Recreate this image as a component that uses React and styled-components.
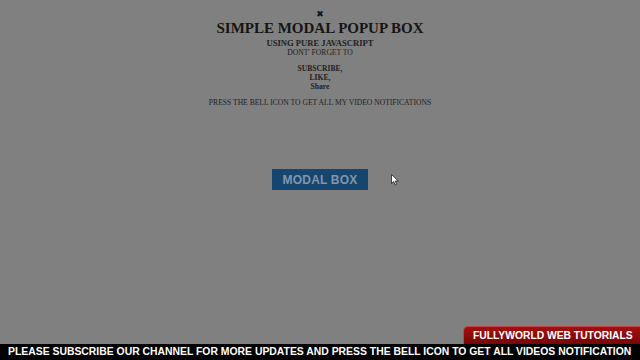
import React from "react";
import styled, { createGlobalStyle } from "styled-components";

const Global = createGlobalStyle`
  html, body { margin: 0; padding: 0; }
  body { background: #808080; }
`;

const Page = styled.div`
  position: relative;
  width: 640px;
  height: 360px;
  background: #808080;
  display: flex;
  flex-direction: column;
  overflow: hidden;
`;

const Content = styled.main`
  flex: 1;
  display: flex;
  flex-direction: column;
  align-items: center;
  padding-top: 10px;
  font-family: "Liberation Serif", "Times New Roman", serif;
  color: #1a1a1a;
`;

const Close = styled.span`
  font-family: "DejaVu Sans", sans-serif;
  font-size: 9px;
  font-weight: bold;
  line-height: 9px;
  color: #111;
`;

const Title = styled.h1`
  margin: 1px 0 0;
  font-size: 15px;
  line-height: 16px;
  font-weight: bold;
  color: #151515;
`;

const Line = styled.div`
  font-size: ${(p) => p.$size || 7.6}px;
  line-height: ${(p) => p.$lh || 8.5}px;
  font-weight: ${(p) => (p.$bold ? "bold" : "normal")};
  margin-top: ${(p) => p.$mt || 0}px;
  color: #1e1e1e;
  text-align: center;
`;

const Button = styled.button`
  margin-top: 62px;
  width: 96px;
  height: 21px;
  border: none;
  padding: 0;
  background: #16466f;
  color: #8196ac;
  font-family: "Liberation Sans", Arial, sans-serif;
  font-weight: bold;
  font-size: 12px;
  letter-spacing: 0.2px;
`;

const Cursor = styled.svg`
  position: absolute;
  left: 391px;
  top: 174px;
`;

const Footer = styled.footer`
  display: flex;
  flex-direction: column;
  align-items: flex-end;
`;

const Banner = styled.div`
  width: 177px;
  height: 18px;
  box-sizing: border-box;
  border: 1px solid #c04848;
  border-right: none;
  border-bottom: none;
  border-radius: 5px 0 0 0;
  background: linear-gradient(#a20f0f, #780606);
  color: #fff;
  font-family: "Liberation Sans", Arial, sans-serif;
  font-weight: bold;
  font-size: 10.3px;
  line-height: 17px;
  padding-left: 9px;
  white-space: nowrap;
`;

const Ticker = styled.div`
  width: 100%;
  height: 16px;
  background: #000;
  color: #fff;
  font-family: "Liberation Sans", Arial, sans-serif;
  font-weight: bold;
  font-size: 10.4px;
  line-height: 16px;
  padding-left: 8px;
  box-sizing: border-box;
  white-space: nowrap;
`;

export default function App() {
  return (
    <>
      <Global />
      <Page>
        <Content>
          <Close>✖</Close>
          <Title>SIMPLE MODAL POPUP BOX</Title>
          <Line $bold $size={8.6} $lh={10} $mt={2}>USING PURE JAVASCRIPT</Line>
          <Line $lh={9}>DONT' FORGET TO</Line>
          <Line $bold $mt={8}>SUBSCRIBE,</Line>
          <Line $bold>LIKE,</Line>
          <Line $bold $lh={9}>Share</Line>
          <Line $mt={7.5}>PRESS THE BELL ICON TO GET ALL MY VIDEO NOTIFICATIONS</Line>
          <Button>MODAL BOX</Button>
        </Content>
        <Cursor width="8" height="12" viewBox="0 0 8 12">
          <path d="M0.5 0.5 L0.5 9.5 L2.7 7.5 L4.2 11 L5.6 10.4 L4.2 7 L7.2 7 Z" fill="#fff" stroke="#222" strokeWidth="0.8" />
        </Cursor>
        <Footer>
          <Banner>FULLYWORLD WEB TUTORIALS</Banner>
          <Ticker>PLEASE SUBSCRIBE OUR CHANNEL FOR MORE UPDATES AND PRESS THE BELL ICON TO GET ALL VIDEOS NOTIFICATION</Ticker>
        </Footer>
      </Page>
    </>
  );
}
